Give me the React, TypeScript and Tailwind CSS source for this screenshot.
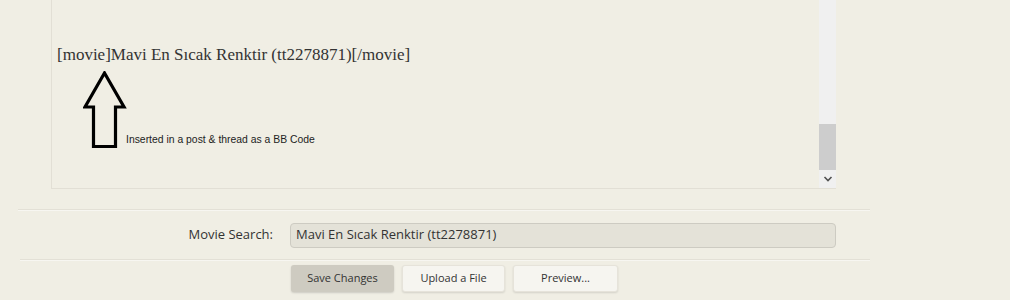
import React from "react";

export default function App() {
  return (
    <div className="w-[1010px] h-[300px] overflow-hidden bg-[#f0eee4] relative">
      {/* Editor panel */}
      <div className="ml-[51px] w-[785px] h-[189px] flex border-l border-b border-[#e2dfd5]">
        <div className="flex-1 flex flex-col">
          <div
            className="pt-[45px] pl-[5px] text-[17px] leading-[20px] text-[#333]"
            style={{ fontFamily: '"Liberation Serif", serif' }}
          >
            [movie]Mavi En Sıcak Renktir (tt2278871)[/movie]
          </div>
          <div className="flex items-end mt-[6px] ml-[31px]">
            <svg width="44" height="79" viewBox="0 0 44 79" className="block">
              <path
                d="M21.5 2 L41 36 L32.5 36 L32.5 75.5 L10.5 75.5 L10.5 36 L2 36 Z"
                fill="none"
                stroke="#000"
                strokeWidth="3.2"
                strokeLinejoin="miter"
              />
            </svg>
            <div
              className="ml-[-1px] mb-[4px] text-[10.4px] leading-[12px] text-[#222]"
              style={{ fontFamily: '"Liberation Sans", Arial, sans-serif' }}
            >
              Inserted in a post &amp; thread as a BB Code
            </div>
          </div>
        </div>
        {/* Scrollbar */}
        <div className="w-[17px] h-full bg-[#f0f0f0] flex flex-col">
          <div className="h-[124px]" />
          <div className="h-[46px] bg-[#cdcdcd]" />
          <div className="flex-1 flex items-center justify-center">
            <svg width="10" height="8" viewBox="0 0 10 8">
              <path d="M1.5 2 L5 5.5 L8.5 2" fill="none" stroke="#505050" strokeWidth="1.6" />
            </svg>
          </div>
        </div>
      </div>

      {/* Form rows */}
      <div
        className="ml-[18px] w-[852px] mt-[20px]"
        style={{ fontFamily: '"Open Sans", sans-serif' }}
      >
        <div className="border-t border-[#e3e0d6] border-b border-b-[#f7f6f1] h-[2px]" />
        <div className="flex items-center h-[48px]">
          <div className="w-[255px] text-right text-[13px] text-[#333]">Movie Search:</div>
          <div className="ml-[17px] w-[546px] h-[25px] rounded-[4px] border border-[#cdcbc2] bg-[#e4e2d8] flex items-center pl-[5px] text-[13px] text-[#333]">
            Mavi En Sıcak Renktir (tt2278871)
          </div>
        </div>
        <div className="border-t border-[#e3e0d6] border-b border-b-[#f7f6f1] h-[2px] ml-[2px]" />
        <div className="flex gap-[8px] pl-[273px] mt-[4px]">
          <div className="w-[103px] h-[27px] rounded-[3px] bg-[#cecbc1] shadow-[0_1px_2px_rgba(0,0,0,0.15)] flex items-center justify-center text-[11px] text-[#333]">
            Save Changes
          </div>
          <div className="w-[103px] h-[27px] rounded-[3px] bg-[#f6f5f0] border border-[#e6e3da] shadow-[0_1px_2px_rgba(0,0,0,0.12)] flex items-center justify-center text-[11px] text-[#333]">
            Upload a File
          </div>
          <div className="w-[105px] h-[27px] rounded-[3px] bg-[#f6f5f0] border border-[#e6e3da] shadow-[0_1px_2px_rgba(0,0,0,0.12)] flex items-center justify-center text-[11px] text-[#333]">
            Preview...
          </div>
        </div>
      </div>
    </div>
  );
}
